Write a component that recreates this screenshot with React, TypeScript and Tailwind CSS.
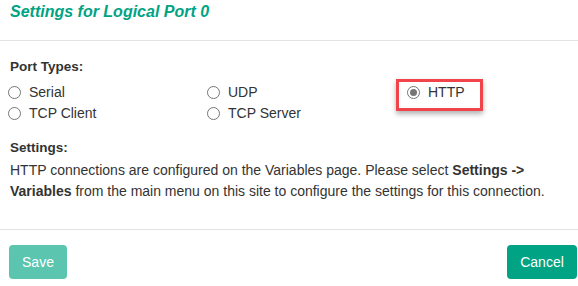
const portTypes = [
  { label: 'Serial', checked: false },
  { label: 'UDP', checked: false },
  { label: 'HTTP', checked: true },
  { label: 'TCP Client', checked: false },
  { label: 'TCP Server', checked: false },
];

function Radio({ label, checked }: { label: string; checked: boolean }) {
  return (
    <div className="flex h-[21px] items-center gap-[8px]">
      <span className="grid h-[13px] w-[13px] place-items-center rounded-full border border-[#767676] bg-white">
        {checked && <span className="h-[7px] w-[7px] rounded-full bg-[#767676]" />}
      </span>
      <span>{label}</span>
    </div>
  );
}

export default function App() {
  return (
    <div className="h-[286px] w-[578px] overflow-hidden bg-white text-[14px] text-[#333] [font-family:'Liberation_Sans',Arial,sans-serif]">
      <div className="h-[41px] border-b border-[#e3e3e3] px-[10px] pt-[2px]">
        <h1 className="text-[16px] font-bold italic leading-[20px] text-[#00a383]">
          Settings for Logical Port 0
        </h1>
      </div>

      <div className="px-[10px] pt-[16px]">
        <p className="text-[13.5px] font-bold leading-[20px]">Port Types:</p>

        <div className="mt-[5px] grid grid-cols-[199px_200px_1fr] -ml-[2px]">
          {portTypes.map((item) =>
            item.checked ? (
              <div key={item.label} className="relative">
                <Radio label={item.label} checked />
                <div className="pointer-events-none absolute left-[-11px] top-[-3px] h-[32px] w-[87px] border-[3px] border-[#f0434a] shadow-[0_3px_5px_rgba(0,0,0,0.3)]" />
              </div>
            ) : (
              <Radio key={item.label} label={item.label} checked={false} />
            )
          )}
        </div>

        <p className="mt-[14px] text-[13.5px] font-bold leading-[20px]">Settings:</p>
        <p className="mt-[2px] leading-[21px]">
          HTTP connections are configured on the Variables page. Please select <b>Settings -&gt;</b>{' '}
          <b>Variables</b> from the main menu on this site to configure the settings for this connection.
        </p>
      </div>

      <div className="mt-[27px] flex justify-between border-t border-[#e3e3e3] pl-[9px] pr-[1px] pt-[15px]">
        <button className="h-[34px] w-[58px] rounded-[4px] bg-[#5bc5b0] text-[14px] text-white">Save</button>
        <button className="h-[34px] w-[70px] rounded-[4px] bg-[#00a383] text-[14px] text-white">Cancel</button>
      </div>
    </div>
  );
}
